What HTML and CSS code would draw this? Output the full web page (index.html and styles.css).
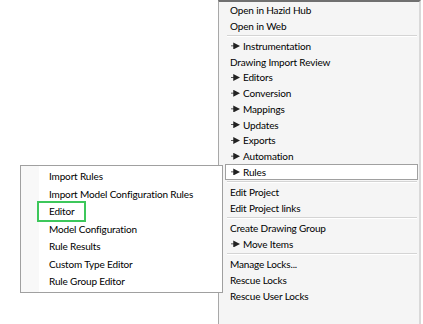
FILE: index.html
```html
<!DOCTYPE html>
<html lang="en">
<head>
    <meta charset="UTF-8">
    <meta name="viewport" content="width=device-width, initial-scale=1.0">
    <title>Context Menu</title>
    <link rel="stylesheet" href="styles.css">
</head>
<body>
    <div class="context-menu">
        <div class="menu-item">Open in Hazid Hub</div>
        <div class="menu-item">Open in Web</div>
        <div class="menu-sep"></div>
        <div class="menu-item has-sub">Instrumentation</div>
        <div class="menu-item">Drawing Import Review</div>
        <div class="menu-item has-sub">Editors</div>
        <div class="menu-item has-sub">Conversion</div>
        <div class="menu-item has-sub">Mappings</div>
        <div class="menu-item has-sub">Updates</div>
        <div class="menu-item has-sub">Exports</div>
        <div class="menu-item has-sub">Automation</div>
        <div class="menu-item has-sub active">Rules</div>
        <div class="menu-sep"></div>
        <div class="menu-item">Edit Project</div>
        <div class="menu-item">Edit Project links</div>
        <div class="menu-sep"></div>
        <div class="menu-item">Create Drawing Group</div>
        <div class="menu-item has-sub">Move Items</div>
        <div class="menu-sep"></div>
        <div class="menu-item">Manage Locks...</div>
        <div class="menu-item">Rescue Locks</div>
        <div class="menu-item">Rescue User Locks</div>
    </div>

    <!-- Rules submenu, opened over the main menu -->
    <div class="submenu">
        <div class="sub-item">Import Rules</div>
        <div class="sub-item">Import Model Configuration Rules</div>
        <div class="sub-item"><span class="marked">Editor</span></div>
        <div class="sub-item">Model Configuration</div>
        <div class="sub-item">Rule Results</div>
        <div class="sub-item">Custom Type Editor</div>
        <div class="sub-item">Rule Group Editor</div>
    </div>
</body>
</html>
```

FILE: styles.css
```css
body {
    margin: 0;
    width: 423px;
    height: 324px;
    overflow: hidden;
    background: #fff;
    font-family: Lato, "Noto Sans", sans-serif;
    font-size: 10px;
    letter-spacing: -0.15px;
    color: #000;
}
.context-menu {
    box-sizing: border-box;
    width: 203px;
    height: 324px;
    margin-left: 218px;
    background: #f5f5f5;
    border-top: 2px solid #707070;
    border-left: 1px solid #a8a8a8;
    border-right: 2px solid #d9d9d9;
}
.menu-item {
    display: flex;
    align-items: center;
    height: 15.75px;
    margin: 0 1px 0 6px;
    padding-left: 4px;
    border: 1px solid transparent;
    box-sizing: border-box;
}
.menu-item.has-sub::before {
    content: '';
    width: 9px;
    height: 7px;
    margin: 0 3px 0 1px;
    background: #222;
    clip-path: polygon(0 43%, 25% 43%, 25% 0, 100% 50%, 25% 100%, 25% 57%, 0 57%);
}
.menu-item.active {
    background: #fff;
    border-color: #a0a0a0;
}
.menu-sep {
    margin: 1.25px 2px 1.25px 8px;
    border-top: 1px solid #d4d4d4;
    border-bottom: 1px solid #fff;
}
.submenu {
    position: absolute;
    left: 20px;
    top: 165px;
    width: 203px;
    box-sizing: border-box;
    padding: 2px 0 1px;
    background: linear-gradient(to right, #f8f8f8 18px, #fff 18px);
    border: 1px solid #a0a0a0;
}
.sub-item {
    height: 17.5px;
    line-height: 17.5px;
    padding-left: 28px;
}
.marked {
    position: relative;
}
.marked::after {
    content: '';
    position: absolute;
    left: -12px;
    right: -11px;
    top: -4px;
    bottom: -5px;
    border: 2px solid #3dc75b;
}
```
